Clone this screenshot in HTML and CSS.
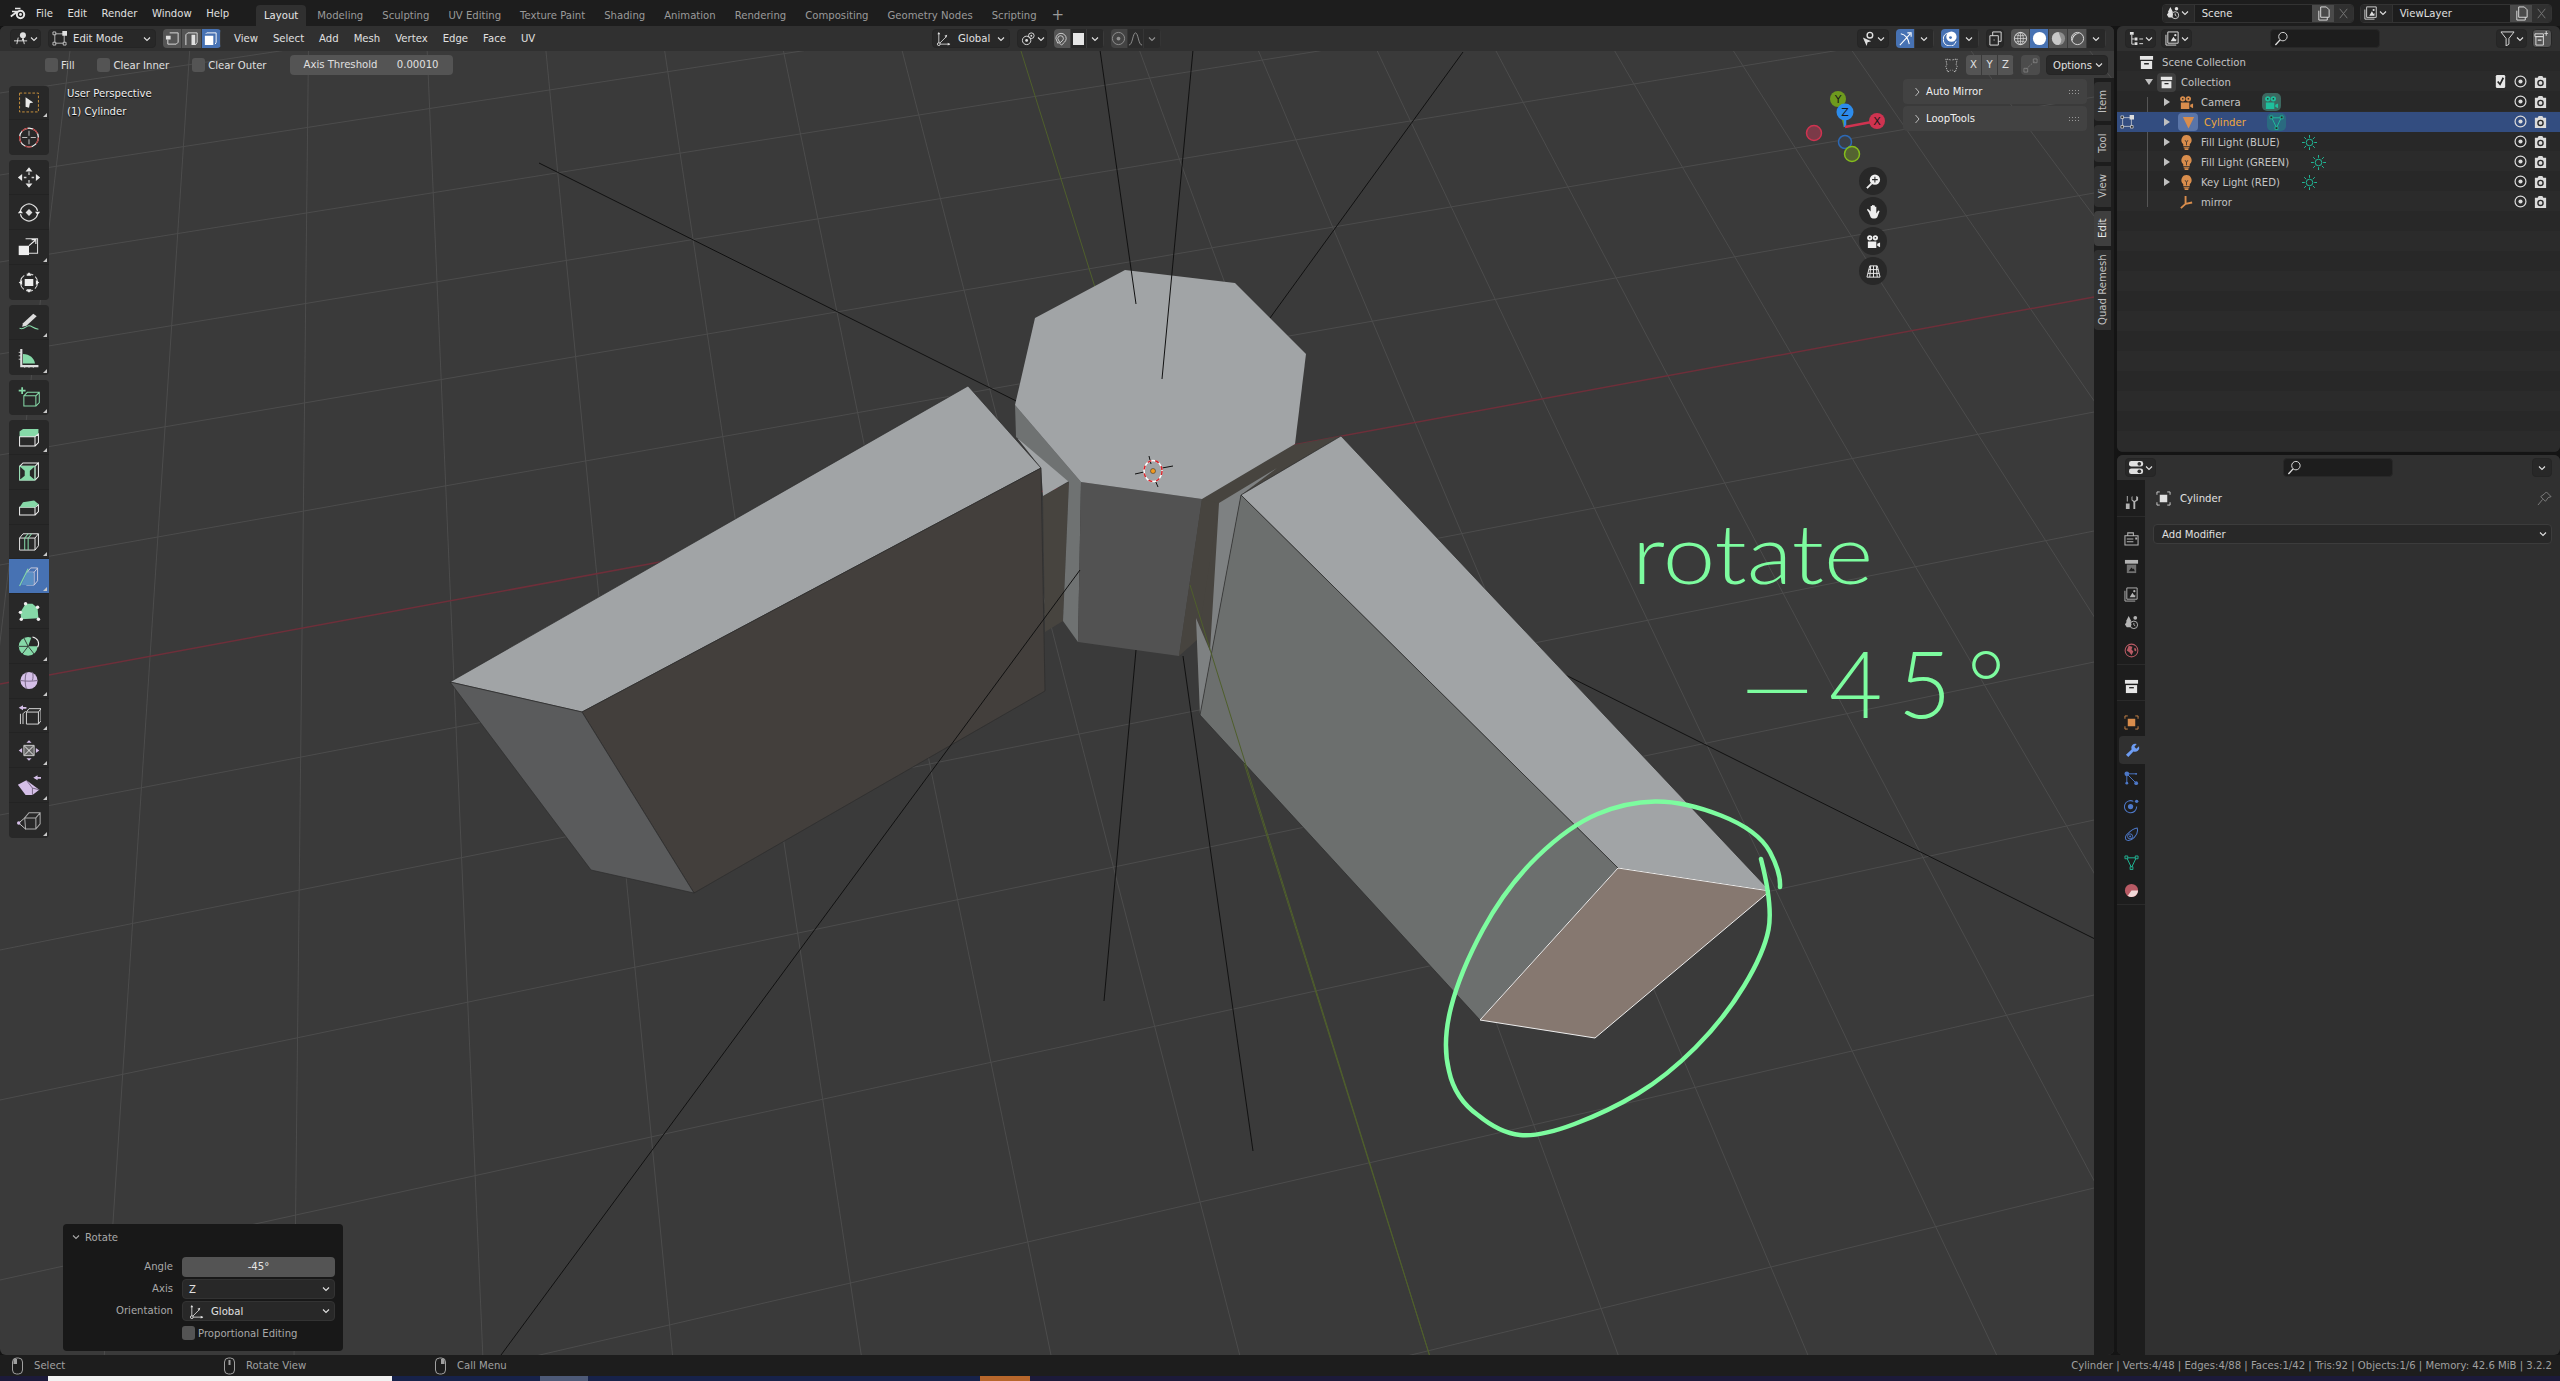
FILE: index.html
```html
<!DOCTYPE html>
<html lang="en">
<head>
    <meta charset="UTF-8">
    <title>Blender 3.2.2</title>
    <link rel="stylesheet" href="styles.css">
</head>
<body>

    <!-- Icon sheet -->
    <svg class="sheet" xmlns="http://www.w3.org/2000/svg">
        <symbol id="chev" viewBox="0 0 10 10"><path d="M2 3.500l3 3 3-3" fill="none" stroke="currentColor" stroke-width="1.100"/></symbol>
        <symbol id="chev-r" viewBox="0 0 10 10"><path d="M3.500 1l3.500 4-3.500 4" fill="none" stroke="currentColor" stroke-width="1"/></symbol>
        <symbol id="logo" viewBox="0 0 16 13"><circle cx="10.500" cy="7.500" r="3.700" fill="none" stroke="currentColor" stroke-width="2"/><circle cx="10.500" cy="7.500" r="1.400" fill="currentColor"/><path d="M5 1.500h5.500M2 4.500h6M.8 9.500L6.800 5" fill="none" stroke="currentColor" stroke-width="1.700"/></symbol>
        <symbol id="gizmo3d" viewBox="0 0 16 16"><path d="M0 10.500h14M3 14l1.500-7M11 14L9.500 7" fill="none" stroke="currentColor"/><circle cx="9.500" cy="4.500" r="3.200" fill="currentColor"/><path d="M8.500 8h2v2h-2z" fill="currentColor"/></symbol>
        <symbol id="mode-edit" viewBox="0 0 16 16"><path d="M3 3h10v10H3z" fill="none" stroke="currentColor" stroke-width=".8"/><path d="M1 1h3v3H1zM1 12h3v3H1zM12 12h3v3h-3z" fill="#282828" stroke="currentColor" stroke-width=".8"/><path d="M11 0h5v5h-5z" fill="currentColor"/></symbol>
        <symbol id="sel-vert" viewBox="0 0 16 16"><path d="M5 2h9v10l-2 2H3V9" fill="none" stroke="currentColor"/><path d="M1 5h5v4H1z" fill="currentColor"/></symbol>
        <symbol id="sel-edge" viewBox="0 0 16 16"><path d="M2 15V4l2-2h10v10l-2 3" fill="none" stroke="currentColor"/><path d="M8 4h4v11H8z" fill="currentColor"/></symbol>
        <symbol id="sel-face" viewBox="0 0 16 16"><path d="M2 5h9v10H2z" fill="currentColor"/><path d="M3 3l1-1h10v10l-1 2" fill="none" stroke="currentColor"/></symbol>
        <symbol id="orient" viewBox="0 0 16 16"><path d="M3 14V2M3 14h12M3 14l8-8" fill="none" stroke="currentColor" stroke-width=".9"/><path d="M1.500 3.500L3 1l1.500 2.500zM12.500 12.500L15 14l-2.500 1.500zM9 5l3-1-1 3z" fill="currentColor"/><circle cx="3" cy="14" r="1.500" fill="#282828" stroke="currentColor"/></symbol>
        <symbol id="pivot" viewBox="0 0 16 16"><circle cx="6" cy="10" r="4.500" fill="none" stroke="currentColor"/><circle cx="6" cy="10" r="1.500" fill="currentColor"/><circle cx="11" cy="5" r="3" fill="none" stroke="currentColor"/><circle cx="11" cy="5" r="1" fill="currentColor"/></symbol>
        <symbol id="magnet" viewBox="0 0 16 16"><path d="M4 13l-2-5a5.500 5.500 0 1 1 11 0c0 3-3 5-5 7l-2-2c2-2 4-3 4-5a3 3 0 1 0-6 0l2 4z" fill="none" stroke="currentColor" stroke-width=".9"/></symbol>
        <symbol id="prop" viewBox="0 0 16 16"><circle cx="8" cy="8" r="6.500" fill="none" stroke="currentColor"/><circle cx="8" cy="8" r="2" fill="currentColor"/></symbol>
        <symbol id="falloff" viewBox="0 0 16 16"><path d="M1 15c4 0 4-13 7-13s3 13 7 13" fill="none" stroke="currentColor"/></symbol>
        <symbol id="selectable" viewBox="0 0 16 16"><circle cx="9.500" cy="4.500" r="3" fill="none" stroke="currentColor" stroke-width="1.500"/><path d="M2 7l9 4-4 1-1 4z" fill="currentColor"/></symbol>
        <symbol id="gizmo-arrows" viewBox="0 0 16 16"><path d="M2 15L13 3M3 3c5 1 8 5 9 11M10 2h4v4" fill="none" stroke="currentColor" stroke-width="1.100"/></symbol>
        <symbol id="overlay" viewBox="0 0 16 16"><path d="M6 2a7 7 0 1 0 8 9" fill="none" stroke="currentColor"/><circle cx="9" cy="6" r="5.500" fill="currentColor"/><circle cx="8" cy="7" r="1.500" fill="#4772b3"/></symbol>
        <symbol id="xray" viewBox="0 0 16 16"><path d="M2 5h9v10H2z" fill="none" stroke="currentColor"/><path d="M5 5V1h9v10h-3" fill="none" stroke="currentColor"/><path d="M6 9h1v1H6z" fill="currentColor"/></symbol>
        <symbol id="sh-wire" viewBox="0 0 16 16"><circle cx="8" cy="8" r="6.500" fill="none" stroke="currentColor"/><path d="M1.500 8h13M8 1.500v13M3 4c3 1.500 7 1.500 10 0M3 12c3-1.500 7-1.500 10 0" fill="none" stroke="currentColor" stroke-width=".7"/><ellipse cx="8" cy="8" rx="3" ry="6.500" fill="none" stroke="currentColor" stroke-width=".7"/></symbol>
        <symbol id="sh-solid" viewBox="0 0 16 16"><circle cx="8" cy="8" r="7" fill="currentColor"/></symbol>
        <symbol id="sh-mat" viewBox="0 0 16 16"><circle cx="8" cy="8" r="7" fill="#8d8d8d"/><path d="M8 1a7 7 0 0 0 0 14 7 7 0 0 0 3-6z" fill="#c8c8c8"/></symbol>
        <symbol id="sh-render" viewBox="0 0 16 16"><circle cx="8" cy="8" r="6.500" fill="none" stroke="currentColor"/><path d="M3 11A6 6 0 0 1 11 3a7 7 0 0 0-8 8z" fill="currentColor"/></symbol>
        <symbol id="mirror" viewBox="0 0 16 16"><path d="M7 2L2 1l1 6-1 2 2 6 3-2M9 2l5-1-1 6 1 2-2 6-3-2" fill="none" stroke="currentColor" stroke-dasharray="1.500 1"/></symbol>
        <symbol id="snap-mesh" viewBox="0 0 16 16"><path d="M3 12L13 3" stroke="currentColor" stroke-dasharray="2 1.500" fill="none"/><path d="M1 11h4v4H1zM11 1h4v4h-4z" fill="none" stroke="currentColor"/></symbol>
        <symbol id="scene" viewBox="0 0 16 16"><path d="M5 1l3 6H2zM3 7h4l1 3-1 3H3l-2-3z" fill="currentColor"/><circle cx="12" cy="3" r="2" fill="currentColor"/><circle cx="10.500" cy="10.500" r="4" fill="none" stroke="currentColor"/><path d="M10.500 8.500v2l1.500 1" fill="none" stroke="currentColor"/></symbol>
        <symbol id="viewlayer" viewBox="0 0 16 16"><path d="M1 4v11h11M3 2v11h11V1H3z" fill="none" stroke="currentColor"/><path d="M6 11l3-5 2 3 1-1v3z" fill="currentColor"/><circle cx="11" cy="4.500" r="1.200" fill="currentColor"/></symbol>
        <symbol id="copy" viewBox="0 0 16 16"><path d="M3 5v10h9V12M5 12V1h6l3 3v8z" fill="none" stroke="currentColor"/></symbol>
        <symbol id="cross" viewBox="0 0 16 16"><path d="M4 3l8 10M12 3L4 13" fill="none" stroke="currentColor"/></symbol>
        <symbol id="outliner" viewBox="0 0 16 16"><path d="M1 1h4v3H1zM6 7h3v3H6zM6 12h3v3H6z" fill="currentColor"/><path d="M3 4v10h3M3 8.500h3M11 8.500h4M11 13.500h4" fill="none" stroke="currentColor"/></symbol>
        <symbol id="search" viewBox="0 0 16 16"><circle cx="9.500" cy="6" r="4.500" fill="none" stroke="currentColor"/><path d="M6.500 9.500L1.500 15" fill="none" stroke="currentColor" stroke-width="1.400"/></symbol>
        <symbol id="zoom-plus" viewBox="0 0 16 16"><circle cx="9.500" cy="6" r="5.500" fill="currentColor"/><path d="M6 10L1 15" fill="none" stroke="currentColor" stroke-width="2"/><path d="M9.500 3v6M6.500 6h6" fill="none" stroke="#282828" stroke-width="1.100"/></symbol>
        <symbol id="filter" viewBox="0 0 16 16"><path d="M1 1h14L9.500 8v6l-3 2V8z" fill="none" stroke="currentColor"/></symbol>
        <symbol id="new-coll" viewBox="0 0 16 16"><path d="M1 3h9v3H1zM2 6h8v9H2z" fill="none" stroke="currentColor"/><path d="M4 9h4v1.500H4zM11 2h4v1h-4zM12.500 0h1v5h-1z" fill="currentColor"/></symbol>
        <symbol id="collection" viewBox="0 0 16 16"><path d="M1 1h14v4H1z" fill="currentColor"/><path d="M2 6.500h12V15H2z" fill="currentColor"/><path d="M5.500 8.500h5V10h-5z" fill="#282828"/></symbol>
        <symbol id="camera" viewBox="0 0 16 16"><circle cx="4" cy="4" r="2.800" fill="currentColor"/><circle cx="10" cy="4" r="2.800" fill="currentColor"/><path d="M2 8h9v7H2zM12 10.500L15 9v5l-3-1.500z" fill="currentColor"/><circle cx="4" cy="4" r=".9" fill="#282828"/><circle cx="10" cy="4" r=".9" fill="#282828"/></symbol>
        <symbol id="mesh-tri" viewBox="0 0 16 16"><path d="M2 2h12L8 14.500z" fill="currentColor"/></symbol>
        <symbol id="mesh-data" viewBox="0 0 16 16"><path d="M3 3h10L8 13.500z" fill="none" stroke="currentColor"/><path d="M1 1h3v3H1zM12 1h3v3h-3zM6.500 12.500h3v3h-3z" fill="#282828" stroke="currentColor" stroke-width=".9"/></symbol>
        <symbol id="bulb" viewBox="0 0 16 16"><path d="M8 0a5.500 5.500 0 0 0-3.500 9.700V12h7V9.700A5.500 5.500 0 0 0 8 0zM5 13h6v1H5zM6 14.500h4V16H6z" fill="currentColor"/><path d="M6.500 5.500L8 8l1.500-2.500M8 8v3" fill="none" stroke="#282828" stroke-width=".8"/></symbol>
        <symbol id="sun" viewBox="0 0 16 16"><circle cx="8" cy="8" r="3.500" fill="none" stroke="currentColor"/><path d="M8 0v3M8 13v3M0 8h3M13 8h3M2.300 2.300l2.200 2.200M11.500 11.500l2.200 2.200M13.700 2.300l-2.200 2.200M4.500 11.500l-2.200 2.200" fill="none" stroke="currentColor"/></symbol>
        <symbol id="empty" viewBox="0 0 16 16"><path d="M7 1v8.500L2 14M7 9.500L14 8" fill="none" stroke="currentColor" stroke-width="2"/></symbol>
        <symbol id="eye" viewBox="0 0 16 16"><circle cx="8" cy="8" r="5.800" fill="none" stroke="currentColor" stroke-width="1.300"/><circle cx="8" cy="8" r="2.200" fill="currentColor"/></symbol>
        <symbol id="render-cam" viewBox="0 0 16 16"><path d="M2 4h3l1-2h4l1 2h3v11H2z" fill="currentColor"/><circle cx="8" cy="9.500" r="3.500" fill="#282828"/><circle cx="8" cy="9.500" r="2" fill="currentColor"/></symbol>
        <symbol id="tick" viewBox="0 0 16 16"><rect x="3" y="1" width="10" height="14" rx="1.500" fill="currentColor"/><path d="M5 8l2.500 3L11 4" fill="none" stroke="#222" stroke-width="1.800"/></symbol>
        <symbol id="props" viewBox="0 0 16 16"><rect x="0" y="1" width="15" height="6" rx="2.500" fill="currentColor"/><rect x="0" y="9" width="15" height="6" rx="2.500" fill="currentColor"/><circle cx="11" cy="4" r="2" fill="#303030"/><circle cx="11" cy="12" r="2" fill="#303030"/></symbol>
        <symbol id="obj-frame" viewBox="0 0 16 16"><path d="M1 4V1h3M12 1h3v3M15 12v3h-3M4 15H1v-3" fill="none" stroke="currentColor" stroke-width=".9"/><path d="M4 4h8v8H4z" fill="currentColor"/></symbol>
        <symbol id="pin" viewBox="0 0 16 16"><path d="M10 1l5 5-3 1-3 4-5-5 4-3zM6 9l-5 6" fill="none" stroke="currentColor" stroke-width=".9"/></symbol>
        <symbol id="t-tool" viewBox="0 0 16 16"><path d="M3 1h1v6H3zM2 9h4v6H2z" fill="currentColor"/><path d="M9 1v4l2 1.500L13 5V1l2 1v3.500l-3 2V15h-2V7.500L8 5.500V2z" fill="currentColor"/></symbol>
        <symbol id="t-render" viewBox="0 0 16 16"><path d="M1 5h14v10H1zM4 2h6v3H4z" fill="none" stroke="currentColor" stroke-width="1.100"/><path d="M3 8h7v1H3zM3 11h7v1H3zM12 7h2v2h-2z" fill="currentColor"/></symbol>
        <symbol id="t-output" viewBox="0 0 16 16"><path d="M1 1h14v4H1z" fill="currentColor"/><path d="M3 6h10v9H3z" fill="currentColor" opacity=".55"/><path d="M5 13l3-4 1.500 2 1-1 1 3z" fill="#1d1d1d"/></symbol>
        <symbol id="t-world" viewBox="0 0 16 16"><circle cx="8" cy="8" r="6.800" fill="none" stroke="currentColor" stroke-width="1.100"/><path d="M5 3l4 1-1 3 2 2-2 4-2-3-3-2zM11 5l2 1v3l-2-1z" fill="currentColor"/></symbol>
        <symbol id="t-wrench" viewBox="0 0 16 16"><path d="M15 3.500l-3 2.500-2-2 2.500-3A4.500 4.500 0 0 0 7 7L1 12.500 3.500 15 9 9a4.500 4.500 0 0 0 6-5.500z" fill="currentColor"/></symbol>
        <symbol id="t-particle" viewBox="0 0 16 16"><circle cx="3" cy="3" r="2.500" fill="currentColor"/><circle cx="13" cy="13" r="2" fill="currentColor"/><circle cx="3" cy="13" r="1.500" fill="currentColor"/><circle cx="13" cy="3" r="1" fill="currentColor"/><path d="M3 3l10 10M3 3v10M3 3h10" fill="none" stroke="currentColor"/></symbol>
        <symbol id="t-physics" viewBox="0 0 16 16"><circle cx="7" cy="8" r="2.800" fill="currentColor"/><circle cx="13.500" cy="2.500" r="1.800" fill="currentColor"/><path d="M10 2.500A6.500 6.500 0 1 0 13.500 8" fill="none" stroke="currentColor" stroke-width="1.100"/></symbol>
        <symbol id="t-constraint" viewBox="0 0 16 16"><path d="M14 1c1 3 0 7-3 10s-6 4-8 3-2-4 0-6 8-7 11-7z" fill="none" stroke="currentColor" stroke-width="1.100"/><circle cx="6.500" cy="10" r="2.700" fill="none" stroke="currentColor"/><circle cx="6.500" cy="10" r="1" fill="currentColor"/></symbol>
        <symbol id="t-material" viewBox="0 0 16 16"><circle cx="8" cy="8" r="7" fill="currentColor"/><path d="M8 8h7a7 7 0 0 1-11 5.500z" fill="#f0d8d8"/></symbol>
        <symbol id="mouse-l" viewBox="0 0 12 18"><rect x="1" y="1" width="10" height="16" rx="4" fill="none" stroke="currentColor"/><path d="M2 7V3.500A2.500 2.500 0 0 1 5.500 2v5z" fill="currentColor"/></symbol>
        <symbol id="mouse-m" viewBox="0 0 12 18"><rect x="1" y="1" width="10" height="16" rx="4" fill="none" stroke="currentColor"/><path d="M5 3h2v5H5z" fill="currentColor"/></symbol>
        <symbol id="mouse-r" viewBox="0 0 12 18"><rect x="1" y="1" width="10" height="16" rx="4" fill="none" stroke="currentColor"/><path d="M10 7V3.500A2.500 2.500 0 0 0 6.500 2v5z" fill="currentColor"/></symbol>
    </svg>

    <!-- Top bar -->
    <header class="topbar">
        <svg class="ico logo"><use href="#logo"/></svg>
        <nav class="menus">
            <a>File</a><a>Edit</a><a>Render</a><a>Window</a><a>Help</a>
        </nav>
        <nav class="workspaces">
            <a class="active">Layout</a><a>Modeling</a><a>Sculpting</a><a>UV Editing</a><a>Texture Paint</a><a>Shading</a><a>Animation</a><a>Rendering</a><a>Compositing</a><a>Geometry Nodes</a><a>Scripting</a>
            <span class="plus">+</span>
        </nav>
        <div class="datablock scene-block">
            <span class="db-type"><svg class="ico"><use href="#scene"/></svg><svg class="chev"><use href="#chev"/></svg></span>
            <span class="db-name">Scene</span>
            <span class="db-copy"><svg class="ico"><use href="#copy"/></svg></span>
            <span class="db-x"><svg class="ico"><use href="#cross"/></svg></span>
        </div>
        <div class="datablock">
            <span class="db-type"><svg class="ico"><use href="#viewlayer"/></svg><svg class="chev"><use href="#chev"/></svg></span>
            <span class="db-name">ViewLayer</span>
            <span class="db-copy"><svg class="ico"><use href="#copy"/></svg></span>
            <span class="db-x"><svg class="ico"><use href="#cross"/></svg></span>
        </div>
    </header>

    <main class="workspace">

        <!-- 3D viewport -->
        <section class="viewport">
            <svg class="scene" viewBox="0 26 2114 1329" xmlns="http://www.w3.org/2000/svg">
                <!-- grid -->
                <path class="grid" d="M0 15L2094 -289M0 93L2094 -221M0 175L2094 -149M0 262L2094 -73M0 354L2094 8M0 455L2094 97M0 565L2094 193M0 815L2094 412M0 950L2094 531M0 1100L2094 662M0 1280L2094 820M0 1480L2094 995M0 1700L2094 1188M0 1940L2094 1399"/>
                <path class="grid" d="M-40 0L-275 1360M76 0L-85 1360M193 0L104 1360M309 0L294 1360M425 0L483 1360M541 0L673 1360M657 0L862 1360M773 0L1052 1360M889 0L1241 1360M1121 0L1620 1360M1237 0L1810 1360M1353 0L1999 1360M1469 0L2189 1360M1585 0L2378 1360M1701 0L2568 1360M1817 0L2757 1360M1933 0L2947 1360M2049 0L3136 1360"/>
                <path class="axis-red" d="M0 684L2094 297"/>
                <path class="axis-green" d="M1005 0L1431 1360"/>
                <!-- light objects behind the mesh -->
                <path class="wire" d="M539 163L2095 939M1463 52L1270 318M1136 650L1104 1001M1183 656L1253 1151"/>
                <!-- central column -->
                <polygon class="f-dark" points="1043,496 1069,482 1063,621 1045,632"/>
                <polygon class="f-dark" points="1179,656 1202,499 1293,445 1341,436 1241,495 1200,715 1196,618"/>
                <polygon class="f-light" points="1018,439 1028,435 1069,481 1043,496 1041,468"/>
                <polygon class="f-strip" points="1015,405 1081,482 1069,482 1016,437"/>
                <polygon class="f-strip" points="1069,482 1081,482 1078,642 1063,621"/>
                <polygon class="f-side" points="1081,482 1202,499 1179,656 1078,642"/>
                <polygon class="f-dark" points="1202,499 1219,503 1198,639 1179,656"/>
                <polygon class="f-top" points="1125,270 1235,283 1306,354 1295,444 1202,499 1081,482 1015,405 1035,318"/>
                <polygon class="f-strip2" points="1219,503 1277,468 1241,495 1200,715 1196,618 1210,651"/>
                <!-- left box -->
                <polygon class="f-top edge" points="968,386 1041,468 582,712 450,682"/>
                <polygon class="f-brown edge" points="582,712 1041,468 1045,691 694,893"/>
                <polygon class="f-end edge" points="450,682 582,712 694,893 591,870"/>
                <!-- right box -->
                <polygon class="f-top edge" points="1341,436 1770,891 1618,868 1241,495"/>
                <polygon class="f-green edge" points="1241,495 1618,868 1480,1020 1200,715"/>
                <polygon class="f-selected" points="1618,868 1770,891 1595,1038 1480,1020"/>
                <!-- lines that show through the mesh -->
                <path class="wire" d="M1100 50L1136 304M1193 50L1162 379M1080 570L501 1355"/>
                <path class="axis-green" d="M1190 585L1431 1360"/>
                <!-- 3D cursor -->
                <path class="cursor-tick" d="M1135 474L1144 472M1162 468L1173 466M1149 456L1151 464M1155 480L1158 487"/>
                <ellipse class="cursor-a" cx="1153" cy="471" rx="9" ry="10.500"/>
                <ellipse class="cursor-b" cx="1153" cy="471" rx="9" ry="10.500"/>
                <circle class="origin" cx="1153" cy="471" r="2.500"/>
                <!-- annotation -->
                <path class="note-ring" d="M1780 887Q1781 873 1770 852Q1758 830 1721 815.500Q1684 801 1655 801.500Q1626 802 1597.500 814Q1569 826 1537.500 856.500Q1506 887 1483 929.500Q1460 972 1451 1007.500Q1442 1043 1449 1071Q1455 1099 1478.500 1115.500Q1500 1133 1520 1135Q1540 1137 1574.500 1124Q1609 1111 1638 1093.500Q1667 1076 1695.500 1047.500Q1724 1019 1744 986Q1764 953 1768.500 929.500Q1773 906 1761 859"/>
                <text class="note" x="1632" y="584" textLength="241" lengthAdjust="spacingAndGlyphs">rotate</text>
                <text class="note note-angle" x="1741" y="718" textLength="264" lengthAdjust="spacing">—45°</text>
                <!-- navigation gizmo -->
                <path class="gz-y" d="M1845 127L1838 99"/>
                <path class="gz-z" d="M1845 127V112"/>
                <path class="gz-x" d="M1845 127L1877 121"/>
                <circle class="gz-nx" cx="1814" cy="133" r="7.500"/>
                <circle class="gz-nz" cx="1845" cy="142" r="6.500"/>
                <circle class="gz-ny" cx="1852" cy="154" r="7.500"/>
                <circle class="gz-fy" cx="1838" cy="99" r="8"/>
                <circle class="gz-fz" cx="1845" cy="112" r="8.500"/>
                <circle class="gz-fx" cx="1877" cy="121" r="8"/>
                <text class="gz-label" x="1838" y="103">Y</text>
                <text class="gz-label" x="1845" y="116">Z</text>
                <text class="gz-label" x="1877" y="125">X</text>
            </svg>

            <!-- Viewport header -->
            <div class="vp-header">
                <div class="hdr-left">
                    <span class="btn w-editor"><svg class="ico"><use href="#gizmo3d"/></svg><svg class="chev"><use href="#chev"/></svg></span>
                    <span class="btn w-mode"><svg class="ico"><use href="#mode-edit"/></svg><span class="btn-label">Edit Mode</span><svg class="chev push"><use href="#chev"/></svg></span>
                    <span class="seg w-selmode">
                        <i class="seg-item"><svg class="ico"><use href="#sel-vert"/></svg></i>
                        <i class="seg-item"><svg class="ico"><use href="#sel-edge"/></svg></i>
                        <i class="seg-item on"><svg class="ico"><use href="#sel-face"/></svg></i>
                    </span>
                    <nav class="vp-menu">
                        <a>View</a><a>Select</a><a>Add</a><a>Mesh</a><a>Vertex</a><a>Edge</a><a>Face</a><a>UV</a>
                    </nav>
                </div>
                <div class="hdr-center">
                    <span class="btn w-global"><svg class="ico"><use href="#orient"/></svg><span class="btn-label">Global</span><svg class="chev push"><use href="#chev"/></svg></span>
                    <span class="btn w-pivot"><svg class="ico"><use href="#pivot"/></svg><svg class="chev"><use href="#chev"/></svg></span>
                    <span class="seg w-snap">
                        <i class="seg-item grey"><svg class="ico"><use href="#magnet"/></svg></i>
                        <i class="seg-item dark"><b class="snap-square"></b></i>
                        <i class="seg-item dark"><svg class="chev"><use href="#chev"/></svg></i>
                    </span>
                    <span class="seg w-prop dim">
                        <i class="seg-item grey"><svg class="ico"><use href="#prop"/></svg></i>
                        <i class="seg-item dark"><svg class="ico"><use href="#falloff"/></svg></i>
                        <i class="seg-item dark"><svg class="chev"><use href="#chev"/></svg></i>
                    </span>
                </div>
                <div class="hdr-right">
                    <span class="btn w-pick"><svg class="ico"><use href="#selectable"/></svg><svg class="chev"><use href="#chev"/></svg></span>
                    <span class="seg w-gizmo">
                        <i class="seg-item on"><svg class="ico"><use href="#gizmo-arrows"/></svg></i>
                        <i class="seg-item dark"><svg class="chev"><use href="#chev"/></svg></i>
                    </span>
                    <span class="seg w-gizmo">
                        <i class="seg-item on"><svg class="ico"><use href="#overlay"/></svg></i>
                        <i class="seg-item dark"><svg class="chev"><use href="#chev"/></svg></i>
                    </span>
                    <span class="btn w-xray"><svg class="ico"><use href="#xray"/></svg></span>
                    <span class="seg w-shading">
                        <i class="seg-item grey"><svg class="ico"><use href="#sh-wire"/></svg></i>
                        <i class="seg-item on"><svg class="ico"><use href="#sh-solid"/></svg></i>
                        <i class="seg-item grey"><svg class="ico"><use href="#sh-mat"/></svg></i>
                        <i class="seg-item grey"><svg class="ico"><use href="#sh-render"/></svg></i>
                        <i class="seg-item dark"><svg class="chev"><use href="#chev"/></svg></i>
                    </span>
                </div>
            </div>

            <!-- Tool settings -->
            <div class="tool-settings">
                <label class="check"><i></i>Fill</label>
                <label class="check"><i></i>Clear Inner</label>
                <label class="check"><i></i>Clear Outer</label>
                <span class="number"><span>Axis Threshold</span><span>0.00010</span></span>
                <div class="ts-right">
                    <svg class="ico dim-ico"><use href="#mirror"/></svg>
                    <span class="xyz"><i>X</i><i>Y</i><i>Z</i></span>
                    <span class="snapbtn"><svg class="ico"><use href="#snap-mesh"/></svg></span>
                    <span class="btn w-options"><span>Options</span><svg class="chev push"><use href="#chev"/></svg></span>
                </div>
            </div>

            <div class="vp-info">
                <div>User Perspective</div>
                <div>(1) Cylinder</div>
            </div>

            <!-- Toolbar -->
            <div class="toolbar">
                <div class="tool-group">
                    <div class="tool more"><svg viewBox="0 0 28 24"><rect x="3" y="1" width="22" height="22" fill="none" stroke="#e0a040" stroke-dasharray="3 2"/><path d="M10 6l9 6-4 1-1 5-4-1z" fill="#e8e8e8"/></svg></div>
                    <div class="tool"><svg viewBox="0 0 28 24"><circle cx="14" cy="12" r="11" fill="none" stroke="#eee" stroke-width="1.500"/><circle cx="14" cy="12" r="11" fill="none" stroke="#a33" stroke-width="1.500" stroke-dasharray="8 6"/><path d="M14 4v6M14 14v6M6 12h6M16 12h6" stroke="#bbb" stroke-width="1.200"/></svg></div>
                </div>
                <div class="tool-group">
                    <div class="tool"><svg viewBox="0 0 28 24"><path d="M14 0l4 5h-8zM14 24l4-5h-8zM1 12l5-4v8zM27 12l-5-4v8z" fill="#e8e8e8"/><path d="M14 6v3M14 15v3M8 12h3M17 12h3" stroke="#ccc" stroke-width="1.500"/></svg></div>
                    <div class="tool"><svg viewBox="0 0 28 24"><path d="M14 8l4 4-4 4-4-4z" fill="#ddd"/><path d="M4 10c1-6 8-8 10-8s9 2 10 8M4 14c1 6 8 8 10 8s9-2 10-8" fill="none" stroke="#ddd" stroke-width="1.300"/><path d="M1 13h6l-3-4zM27 11h-6l3 4z" fill="#eee"/></svg></div>
                    <div class="tool more"><svg viewBox="0 0 28 24"><path d="M10 3h14v17H4v-7" fill="none" stroke="#ddd" stroke-width="1.200"/><path d="M2 11h12v11H2z" fill="#eee"/><path d="M14 11l7-6M17 4h5v5" fill="none" stroke="#eee" stroke-width="1.300"/></svg></div>
                    <div class="tool"><svg viewBox="0 0 28 24"><circle cx="14" cy="12" r="10" fill="none" stroke="#ddd" stroke-dasharray="8 3" stroke-width="1.200"/><path d="M9 8h10v8H9z" fill="#eee"/><path d="M14 0l3 4h-6zM14 24l3-4h-6zM2 12l4-3v6zM26 12l-4-3v6z" fill="#eee"/></svg></div>
                </div>
                <div class="tool-group">
                    <div class="tool more"><svg viewBox="0 0 28 24"><path d="M7 14L19 3l4 3-12 11-5 1z" fill="#ddd"/><path d="M3 20c6 2 7-3 11-3s4 3 11 4" fill="none" stroke="#86d9a8" stroke-width="1.200"/></svg></div>
                    <div class="tool more"><svg viewBox="0 0 28 24"><path d="M5 2v20h20" fill="none" stroke="#ddd" stroke-width="2.500"/><path d="M7 19V8c8 0 13 5 14 11z" fill="#86d9a8"/><path d="M2 6h3M2 10h3M2 14h3M9 22v2M14 22v2M19 22v2" stroke="#ddd"/></svg></div>
                </div>
                <div class="tool-group">
                    <div class="tool more"><svg viewBox="0 0 28 24"><path d="M8 10h14v12H8zM8 10l4-4h14v12l-4 4M22 10l4-4" fill="none" stroke="#86d9a8" stroke-width="1.200"/><path d="M2 4h8M6 0v8" stroke="#86d9a8" stroke-width="2"/></svg></div>
                </div>
                <div class="tool-group">
                    <div class="tool more"><svg viewBox="0 0 28 24"><path d="M3 5l4-3h18v6l-4 3H3z" fill="#86d9a8"/><path d="M3 11h18v11H3zM21 11l4-3v10l-4 4" fill="none" stroke="#eee" stroke-width="1.200"/></svg></div>
                    <div class="tool"><svg viewBox="0 0 28 24"><path d="M3 6h18v16H3zM21 6l4-4v16l-4 4M3 6l4-4h18" fill="none" stroke="#eee" stroke-width="1.200"/><path d="M3 6h18l-6 5v6l6 5H3l6-5v-6z" fill="#86d9a8"/><path d="M3 6h18v16H3z" fill="none" stroke="#86d9a8"/></svg></div>
                    <div class="tool"><svg viewBox="0 0 28 24"><path d="M3 13h18v9H3zM21 13l4-3v8l-4 4" fill="none" stroke="#eee" stroke-width="1.200"/><path d="M3 13l4-6 13-2 5 4-4 4z" fill="#86d9a8"/></svg></div>
                    <div class="tool more"><svg viewBox="0 0 28 24"><path d="M3 8h18v14H3zM21 8l4-5v14l-4 5M3 8l4-5h18" fill="none" stroke="#eee" stroke-width="1.100"/><path d="M9 22V8l4-5M13 22V8l4-5" fill="none" stroke="#86d9a8" stroke-width="1.200"/></svg></div>
                    <div class="tool active more"><svg viewBox="0 0 28 24"><path d="M12 7l4-5h8v15l-4 5h-9z" fill="none" stroke="#ccd" stroke-width="1.100"/><path d="M12 7h8v15M20 7l4-5" fill="none" stroke="#ccd" stroke-width="1.100"/><path d="M12 7h7v15H5z" fill="#5a8fc4"/><path d="M3 23L13 3" stroke="#86d9a8" stroke-width="1.300"/></svg></div>
                    <div class="tool"><svg viewBox="0 0 28 24"><path d="M10 3h8l6 5 1 12-20 1-1-8z" fill="#86d9a8"/><circle cx="10" cy="3" r="2" fill="#eee"/><circle cx="24" cy="7" r="2" fill="#eee"/><circle cx="4" cy="13" r="2" fill="#eee"/><circle cx="5" cy="21" r="2" fill="#eee"/><circle cx="25" cy="21" r="2" fill="#eee"/></svg></div>
                    <div class="tool more"><svg viewBox="0 0 28 24"><circle cx="13" cy="13" r="11" fill="#86d9a8"/><path d="M13 13L17 2 27 9 24 13z" fill="#282828"/><path d="M2 13h11M13 13L6 22M13 13l7 9M13 13L8 3" stroke="#282828"/><path d="M18 2c6 1 9 7 6 12" fill="none" stroke="#eee" stroke-width="1.200"/></svg></div>
                    <div class="tool more"><svg viewBox="0 0 28 24"><ellipse cx="14" cy="12" rx="10" ry="10" fill="#d5bfe8"/><path d="M4 12c6 1 14 1 20 0M11 2c-2 6-2 14 0 20M18 2c1 3 1 7 0 10" fill="none" stroke="#6c5c78"/></svg></div>
                    <div class="tool more"><svg viewBox="0 0 28 24"><path d="M11 8h14v14H11zM11 8l3-4h14M25 8l3-4v14l-3 4M7 22V10l3-3M4 22V10" fill="none" stroke="#ddd" stroke-width="1.100"/><path d="M2 3l5-3v2h4v2H7v2z" fill="#d5bfe8"/></svg></div>
                    <div class="tool more"><svg viewBox="0 0 28 24"><path d="M8 6h12v12H8z" fill="#666" stroke="#ddd"/><path d="M9 7l10 10M19 7L9 17" stroke="#fff"/><path d="M14 0l3 3h-6zM14 24l3-3h-6zM2 12l4-3v6zM26 12l-4-3v6z" fill="#d5bfe8"/></svg></div>
                    <div class="tool more"><svg viewBox="0 0 28 24"><path d="M1 11l10-5 15 11-8 6H10z" fill="#d5bfe8"/><path d="M11 6l7 9 8 2M18 15v8" fill="none" stroke="#6c5c78"/><path d="M19 3l5-3v2h4v2h-4v2z" fill="#d5bfe8"/></svg></div>
                    <div class="tool more"><svg viewBox="0 0 28 24"><path d="M9 9l5-6h13v13l-5 6H10zM9 9h13v13M22 9l5-6" fill="none" stroke="#aaa" stroke-width="1.200"/><path d="M10 22L2 15l7-6" fill="none" stroke="#ccc" stroke-width="1.100"/><circle cx="2" cy="15" r="2" fill="#d5bfe8"/></svg></div>
                </div>
            </div>

            <!-- Navigation buttons -->
            <div class="nav-buttons">
                <span class="nav-btn"><svg class="ico"><use href="#zoom-plus"/></svg></span>
                <span class="nav-btn"><svg class="ico" viewBox="0 0 16 16"><path d="M3 9L1 6l1-1 3 3V2h1.500v5V1H8v6V1.500h1.500V7V3H11v7l2-3 1.500.5L12 14c-1 2-6 2-7 0z" fill="#eee"/></svg></span>
                <span class="nav-btn"><svg class="ico"><use href="#camera"/></svg></span>
                <span class="nav-btn"><svg class="ico" viewBox="0 0 16 16"><path d="M4 2h8l3 12H1zM8 2v12M3 6h10M2 10h12M5 2L4 14M11 2l1 12" fill="none" stroke="#eee"/></svg></span>
            </div>

            <!-- Sidebar panels -->
            <div class="side-panels">
                <div class="side-panel"><svg class="chev-r"><use href="#chev-r"/></svg>Auto Mirror<span class="grip"></span></div>
                <div class="side-panel"><svg class="chev-r"><use href="#chev-r"/></svg>LoopTools<span class="grip"></span></div>
            </div>
            <div class="side-tabs">
                <a class="t-item">Item</a>
                <a class="t-tool">Tool</a>
                <a class="t-view">View</a>
                <a class="t-edit active">Edit</a>
                <a class="t-quad">Quad Remesh</a>
            </div>

            <!-- Last operator panel -->
            <div class="op-panel">
                <div class="op-title"><svg class="chev"><use href="#chev"/></svg>Rotate</div>
                <div class="op-grid">
                    <span class="op-label">Angle</span><span class="op-value">-45°</span>
                    <span class="op-label">Axis</span><span class="op-select">Z<svg class="chev push"><use href="#chev"/></svg></span>
                    <span class="op-label">Orientation</span><span class="op-select"><svg class="ico"><use href="#orient"/></svg><span class="btn-label">Global</span><svg class="chev push"><use href="#chev"/></svg></span>
                    <span></span><label class="check op-check"><i></i>Proportional Editing</label>
                </div>
            </div>
        </section>

        <div class="side-column">

            <!-- Outliner -->
            <section class="outliner">
                <div class="pane-header">
                    <span class="btn w-editor"><svg class="ico"><use href="#outliner"/></svg><svg class="chev"><use href="#chev"/></svg></span>
                    <span class="btn w-editor w-display"><svg class="ico"><use href="#viewlayer"/></svg><svg class="chev"><use href="#chev"/></svg></span>
                    <span class="search-box out-search"><svg class="ico"><use href="#search"/></svg></span>
                    <span class="btn w-editor w-filter"><svg class="ico"><use href="#filter"/></svg><svg class="chev"><use href="#chev"/></svg></span>
                    <span class="btn w-new"><svg class="ico"><use href="#new-coll"/></svg></span>
                </div>
                <div class="tree">
                    <span class="tree-line"></span>
                    <div class="row d0"><svg class="ico c-white"><use href="#collection"/></svg><span class="name">Scene Collection</span></div>
                    <div class="row d1"><i class="tri down"></i><span class="icon-box"><svg class="ico c-white"><use href="#collection"/></svg></span><span class="name">Collection</span>
                        <span class="row-end"><svg class="ico c-white"><use href="#tick"/></svg><svg class="ico"><use href="#eye"/></svg><svg class="ico"><use href="#render-cam"/></svg></span></div>
                    <div class="row d2"><i class="tri"></i><svg class="ico c-orange"><use href="#camera"/></svg><span class="name">Camera</span><span class="child-box"><svg class="ico c-teal"><use href="#camera"/></svg></span>
                        <span class="row-end"><svg class="ico"><use href="#eye"/></svg><svg class="ico"><use href="#render-cam"/></svg></span></div>
                    <div class="row d2 selected"><svg class="ico row-mode"><use href="#mode-edit"/></svg><i class="tri"></i><span class="active-box"><svg class="ico c-orange"><use href="#mesh-tri"/></svg></span><span class="name c-name">Cylinder</span><span class="child-box sel"><svg class="ico c-teal"><use href="#mesh-data"/></svg></span>
                        <span class="row-end"><svg class="ico"><use href="#eye"/></svg><svg class="ico"><use href="#render-cam"/></svg></span></div>
                    <div class="row d2"><i class="tri"></i><svg class="ico c-orange"><use href="#bulb"/></svg><span class="name">Fill Light (BLUE)</span><svg class="ico c-teal child"><use href="#sun"/></svg>
                        <span class="row-end"><svg class="ico"><use href="#eye"/></svg><svg class="ico"><use href="#render-cam"/></svg></span></div>
                    <div class="row d2"><i class="tri"></i><svg class="ico c-orange"><use href="#bulb"/></svg><span class="name">Fill Light (GREEN)</span><svg class="ico c-teal child"><use href="#sun"/></svg>
                        <span class="row-end"><svg class="ico"><use href="#eye"/></svg><svg class="ico"><use href="#render-cam"/></svg></span></div>
                    <div class="row d2"><i class="tri"></i><svg class="ico c-orange"><use href="#bulb"/></svg><span class="name">Key Light (RED)</span><svg class="ico c-teal child"><use href="#sun"/></svg>
                        <span class="row-end"><svg class="ico"><use href="#eye"/></svg><svg class="ico"><use href="#render-cam"/></svg></span></div>
                    <div class="row d2"><i class="tri hidden"></i><svg class="ico c-orange"><use href="#empty"/></svg><span class="name">mirror</span>
                        <span class="row-end"><svg class="ico"><use href="#eye"/></svg><svg class="ico"><use href="#render-cam"/></svg></span></div>
                </div>
            </section>

            <!-- Properties -->
            <section class="properties">
                <div class="pane-header">
                    <span class="btn w-editor"><svg class="ico"><use href="#props"/></svg><svg class="chev"><use href="#chev"/></svg></span>
                    <span class="search-box prop-search"><svg class="ico"><use href="#search"/></svg></span>
                    <span class="btn w-more"><svg class="chev"><use href="#chev"/></svg></span>
                </div>
                <div class="prop-body">
                    <div class="prop-tabs">
                        <div class="tab-group">
                            <span class="p-tab"><svg class="ico c-grey"><use href="#t-tool"/></svg></span>
                        </div>
                        <div class="tab-group">
                            <span class="p-tab"><svg class="ico c-grey"><use href="#t-render"/></svg></span>
                            <span class="p-tab"><svg class="ico c-grey"><use href="#t-output"/></svg></span>
                            <span class="p-tab"><svg class="ico c-grey"><use href="#viewlayer"/></svg></span>
                            <span class="p-tab"><svg class="ico c-grey"><use href="#scene"/></svg></span>
                            <span class="p-tab"><svg class="ico c-red"><use href="#t-world"/></svg></span>
                        </div>
                        <div class="tab-group">
                            <span class="p-tab"><svg class="ico c-white"><use href="#collection"/></svg></span>
                        </div>
                        <div class="tab-group">
                            <span class="p-tab"><svg class="ico c-orange"><use href="#obj-frame"/></svg></span>
                            <span class="p-tab on"><svg class="ico c-blue"><use href="#t-wrench"/></svg></span>
                            <span class="p-tab"><svg class="ico c-dblue"><use href="#t-particle"/></svg></span>
                            <span class="p-tab"><svg class="ico c-dblue"><use href="#t-physics"/></svg></span>
                            <span class="p-tab"><svg class="ico c-dblue"><use href="#t-constraint"/></svg></span>
                            <span class="p-tab"><svg class="ico c-teal"><use href="#mesh-data"/></svg></span>
                            <span class="p-tab"><svg class="ico c-red"><use href="#t-material"/></svg></span>
                        </div>
                    </div>
                    <div class="prop-content">
                        <div class="crumb">
                            <svg class="ico"><use href="#obj-frame"/></svg>
                            <span>Cylinder</span>
                            <svg class="ico pin"><use href="#pin"/></svg>
                        </div>
                        <div class="add-modifier">Add Modifier<svg class="chev push"><use href="#chev"/></svg></div>
                    </div>
                </div>
            </section>
        </div>
    </main>

    <!-- Status bar -->
    <footer class="statusbar">
        <span class="hint h-select"><svg class="mouse"><use href="#mouse-l"/></svg>Select</span>
        <span class="hint h-rotate"><svg class="mouse"><use href="#mouse-m"/></svg>Rotate View</span>
        <span class="hint"><svg class="mouse"><use href="#mouse-r"/></svg>Call Menu</span>
        <span class="stats">Cylinder | Verts:4/48 | Edges:4/88 | Faces:1/42 | Tris:92 | Objects:1/6 | Memory: 42.6 MiB | 3.2.2</span>
    </footer>

    <!-- Desktop taskbar sliver -->
    <div class="taskbar">
        <i class="tb-left"></i><i class="tb-white"></i><i class="tb-a"></i><i class="tb-light"></i><i class="tb-b"></i><i class="tb-orange"></i><i class="tb-c"></i>
    </div>

</body>
</html>
```

FILE: styles.css
```css
/* Reset styles */
* {
    margin: 0;
    padding: 0;
    box-sizing: border-box;
}

body {
    width: 2560px;
    height: 1381px;
    display: flex;
    flex-direction: column;
    overflow: hidden;
    background: #141414;
    color: #e0e0e0;
    font-family: "DejaVu Sans", sans-serif;
    font-size: 10.1px;
}

.sheet {
    display: none;
}

i {
    font-style: normal;
}

.ico {
    display: block;
    flex: none;
    width: 15px;
    height: 15px;
}

.chev {
    display: block;
    flex: none;
    width: 10px;
    height: 10px;
}

.push {
    margin-left: auto;
}

/* Colours for icons */
.c-white { color: #e6e6e6; }
.c-grey { color: #b4b4b4; }
.c-orange { color: #d98d4c; }
.c-teal { color: #1fbf9c; }
.c-red { color: #b85a64; }
.c-blue { color: #6d9cf2; }
.c-dblue { color: #4d78c8; }

/* Top bar */
.topbar {
    flex: none;
    height: 26px;
    display: flex;
    align-items: center;
    background: #1d1d1d;
    padding-left: 10px;
}

.logo {
    width: 16px;
    height: 13px;
    margin-right: 10px;
    color: #e6e6e6;
}

.menus {
    display: flex;
    gap: 14.5px;
    width: 220px;
}

.workspaces {
    display: flex;
    align-items: flex-end;
    gap: 3px;
    height: 26px;
    color: #9a9a9a;
}

.workspaces a {
    height: 21px;
    padding: 0 8px;
    line-height: 21px;
    border-radius: 4px 4px 0 0;
}

.workspaces a.active {
    background: #303030;
    color: #e6e6e6;
}

.plus {
    height: 21px;
    line-height: 20px;
    padding-left: 4px;
    font-size: 15px;
}

.datablock {
    display: flex;
    width: 192px;
    height: 19px;
    margin-right: 8px;
    border: 1px solid #333;
    border-radius: 4px;
    overflow: hidden;
}

.scene-block {
    margin-left: auto;
    margin-right: 6px;
}

.db-type {
    width: 31px;
    display: flex;
    align-items: center;
    padding-left: 3px;
    background: #282828;
}

.db-type .ico {
    width: 14px;
    height: 14px;
}

.db-name {
    width: 120px;
    line-height: 17px;
    padding-left: 7px;
    background: #1d1d1d;
    border-left: 1px solid #333;
}

.db-copy {
    width: 22px;
    display: flex;
    align-items: center;
    justify-content: center;
    background: #4a4a4a;
}

.db-x {
    width: 19px;
    display: flex;
    align-items: center;
    justify-content: center;
    background: #303030;
    color: #777;
}

/* Main area */
.workspace {
    flex: none;
    height: 1329px;
    display: flex;
}

.viewport {
    position: relative;
    flex: none;
    width: 2114px;
    background: #3a3a3a;
    border-radius: 6px;
    overflow: hidden;
}

.scene {
    position: absolute;
    top: 0;
    left: 0;
    width: 2114px;
    height: 1329px;
}

.grid { fill: none; stroke: #4c4c4c; stroke-width: 1; }
.axis-red { fill: none; stroke: #6e2f3a; stroke-width: 1.5; }
.axis-green { fill: none; stroke: #4f5f2c; stroke-width: 1; }
.wire { fill: none; stroke: #111; stroke-width: 1; }

.f-top { fill: #a1a4a6; }
.f-light { fill: #a1a4a6; }
.f-side { fill: #525252; }
.f-strip { fill: #6f7272; }
.f-strip2 { fill: #7e8182; }
.f-dark { fill: #47443f; }
.f-brown { fill: #433f3c; }
.f-end { fill: #5a5b5c; }
.f-green { fill: #6c6f6e; }
.edge { stroke: #2c2c2c; stroke-width: .7; }
.f-selected { fill: #867870; stroke: #eeeeee; stroke-width: 1; }

.cursor-tick { fill: none; stroke: #111; stroke-width: 1; }
.cursor-a { fill: none; stroke: #fff; stroke-width: 1.5; }
.cursor-b { fill: none; stroke: #d8262c; stroke-width: 1.5; stroke-dasharray: 4 4; }
.origin { fill: #f29a1f; stroke: #222; stroke-width: .5; }

.note-ring { fill: none; stroke: #7dfc9f; stroke-width: 4.5; stroke-linecap: round; }
.note { fill: #7dfc9f; font-family: "Lato", sans-serif; font-size: 82px; font-weight: 300; }
.note-angle { font-size: 92px; }

.gz-x, .gz-y, .gz-z { fill: none; stroke-width: 2.5; }
.gz-x { stroke: #cf3350; }
.gz-y { stroke: #6e9a1e; }
.gz-z { stroke: #2d8ceb; }
.gz-nx { fill: #7b3a48; stroke: #cf3350; stroke-width: 1.5; }
.gz-nz { fill: #3a3f46; stroke: #2d69b4; stroke-width: 1.5; }
.gz-ny { fill: #546331; stroke: #84bd1c; stroke-width: 1.5; }
.gz-fx { fill: #cf3350; }
.gz-fy { fill: #6e9a1e; }
.gz-fz { fill: #2d8ceb; }
.gz-label { fill: #181818; font-size: 11px; text-anchor: middle; font-family: "DejaVu Sans", sans-serif; }

/* Header widgets */
.vp-header {
    position: relative;
    height: 25px;
    display: flex;
    align-items: center;
    padding: 0 8px 0 10px;
    background: #303030;
}

.hdr-left {
    flex: none;
    width: 922px;
    display: flex;
    align-items: center;
    gap: 7px;
}

.hdr-center {
    display: flex;
    align-items: center;
    gap: 7px;
}

.hdr-right {
    margin-left: auto;
    display: flex;
    align-items: center;
    gap: 7px;
}

.btn {
    display: flex;
    align-items: center;
    height: 19px;
    padding: 0 3px;
    background: #282828;
    border: 1px solid #252525;
    border-radius: 4px;
}

.btn-label {
    margin-left: 7px;
}

.w-editor { width: 31px; }
.w-mode { width: 108px; }
.w-mode .btn-label { margin-left: 6px; }
.w-global { width: 78px; }
.w-pivot { width: 30px; }
.w-pick { width: 32px; }
.w-xray { width: 18px; padding: 0 1px; }

.seg {
    display: flex;
    height: 19px;
    border-radius: 4px;
    overflow: hidden;
}

.seg-item {
    display: flex;
    flex: 1;
    align-items: center;
    justify-content: center;
    background: #545454;
    border-right: 1px solid #3a3a3a;
}

.seg-item.on { background: #4772b3; color: #fff; }
.seg-item.grey { background: #545454; }
.seg-item.dark { background: #282828; }

.w-selmode { width: 58px; }
.w-snap { width: 50px; }
.w-prop { width: 50px; }
.dim { opacity: .55; }
.w-gizmo { width: 38px; }
.w-shading { width: 95px; }

.snap-square {
    width: 11px;
    height: 12px;
    background: #e6e6e6;
}

.vp-menu {
    display: flex;
    gap: 15px;
    margin-left: 6px;
}

/* Tool settings */
.tool-settings {
    position: relative;
    height: 20px;
    margin-top: 4px;
    display: flex;
    align-items: center;
    padding: 0 6px 0 45px;
}

.check {
    display: flex;
    align-items: center;
    gap: 3px;
    margin-right: 23px;
}

.check i {
    width: 13px;
    height: 14px;
    background: #545454;
    border-radius: 3px;
}

.number {
    display: flex;
    justify-content: space-between;
    width: 163px;
    height: 20px;
    line-height: 20px;
    padding: 0 14px;
    background: #545454;
    border-radius: 4px;
}

.ts-right {
    margin-left: auto;
    display: flex;
    align-items: center;
    gap: 5px;
}

.dim-ico {
    color: #c0c0c0;
}

.xyz {
    display: flex;
    height: 20px;
    width: 48px;
    margin-left: 2px;
    border-radius: 4px;
    overflow: hidden;
}

.xyz i {
    flex: 1;
    text-align: center;
    line-height: 20px;
    background: #545454;
    border-right: 1px solid #3a3a3a;
}

.snapbtn {
    display: flex;
    width: 19px;
    height: 20px;
    align-items: center;
    justify-content: center;
    background: #545454;
    border-radius: 4px;
    color: #999;
    opacity: .7;
    margin-left: 2px;
}

.w-options {
    width: 62px;
    height: 20px;
    padding: 0 3px 0 6px;
    margin-left: 1px;
}

.vp-info {
    position: absolute;
    left: 67px;
    top: 59px;
    line-height: 18px;
    color: #f0f0f0;
    text-shadow: 0 1px 1px #000;
}

/* Toolbar */
.toolbar {
    position: absolute;
    left: 9px;
    top: 59.5px;
    width: 40px;
    display: flex;
    flex-direction: column;
    gap: 5.4px;
}

.tool-group {
    background: #282828;
    border-radius: 4px;
    overflow: hidden;
}

.tool {
    position: relative;
    height: 34.8px;
    display: flex;
    align-items: center;
    justify-content: center;
    border-bottom: 1px solid #232323;
}

.tool:last-child {
    border-bottom: none;
}

.tool svg {
    width: 24px;
    height: 21px;
}

.tool.active {
    background: #4772b3;
}

.tool.more::after {
    content: "";
    position: absolute;
    right: 2px;
    bottom: 2px;
    border-left: 4px solid transparent;
    border-bottom: 4px solid #c8c8c8;
}

/* Navigation buttons */
.nav-buttons {
    position: absolute;
    left: 1859px;
    top: 141px;
    display: flex;
    flex-direction: column;
    gap: 2px;
}

.nav-btn {
    width: 28px;
    height: 28px;
    display: flex;
    align-items: center;
    justify-content: center;
    background: #282828;
    border-radius: 50%;
    color: #f0f0f0;
}

/* Sidebar */
.side-panels {
    position: absolute;
    left: 1903px;
    top: 53px;
    width: 184px;
    display: flex;
    flex-direction: column;
    gap: 2px;
}

.side-panel {
    display: flex;
    align-items: center;
    height: 25px;
    padding: 0 8px 0 9px;
    background: #424242;
    border-radius: 4px;
    color: #f0f0f0;
}

.chev-r {
    width: 10px;
    height: 10px;
    margin-right: 4px;
    color: #bbb;
}

.grip {
    width: 11px;
    height: 6px;
    margin-left: auto;
    background: radial-gradient(circle, #999 .7px, transparent 1px) 0 0 / 3px 3px;
}

.side-tabs {
    position: absolute;
    right: 0;
    top: 52px;
    bottom: 0;
    width: 20px;
    display: flex;
    flex-direction: column;
    gap: 4px;
    padding-top: 4px;
    background: #1d1d1d;
}

.side-tabs a {
    width: 17px;
    display: block;
    writing-mode: vertical-rl;
    transform: rotate(180deg);
    text-align: center;
    line-height: 17px;
    background: #303030;
    border-radius: 0 4px 4px 0;
    color: #c0c0c0;
}

.side-tabs a.active {
    background: #3f3f3f;
    color: #e6e6e6;
}

.t-item { height: 39px; }
.t-tool { height: 37px; }
.t-view { height: 41px; }
.t-edit { height: 35px; }
.t-quad { height: 80px; }

/* Last operator panel */
.op-panel {
    position: absolute;
    left: 63px;
    top: 1198px;
    width: 280px;
    height: 127px;
    padding: 4px 8px;
    background: #181818;
    border-radius: 4px;
    color: #a8a8a8;
}

.op-title {
    display: flex;
    align-items: center;
    gap: 4px;
    height: 18px;
    margin-bottom: 11px;
}

.op-grid {
    display: grid;
    grid-template-columns: 102px 153px;
    grid-auto-rows: 20px;
    gap: 2px 9px;
}

.op-label {
    line-height: 20px;
    text-align: right;
}

.op-value {
    line-height: 20px;
    text-align: center;
    background: #545454;
    border-radius: 4px;
    color: #e6e6e6;
}

.op-select {
    display: flex;
    align-items: center;
    padding: 0 3px 0 6px;
    background: #282828;
    border: 1px solid #333;
    border-radius: 4px;
    color: #e0e0e0;
}

.op-check {
    color: #a8a8a8;
}

/* Right column */
.side-column {
    flex: none;
    width: 443px;
    margin-left: 3px;
    display: flex;
    flex-direction: column;
    gap: 3px;
}

.outliner {
    height: 426px;
    background: #282828;
    border-radius: 6px;
    overflow: hidden;
}

.pane-header {
    height: 25px;
    display: flex;
    align-items: center;
    padding: 0 8px;
    background: #303030;
}

.w-display { margin-left: 5px; }
.w-filter { margin-left: auto; }
.w-new { width: 20px; padding: 0 1px; background: #545454; margin-left: 5px; }
.w-more { width: 20px; padding: 0 4px; margin-left: auto; }

.search-box {
    display: flex;
    align-items: center;
    height: 19px;
    padding-left: 3px;
    background: #1d1d1d;
    border: 1px solid #282828;
    border-radius: 4px;
}

.out-search { width: 110px; margin-left: 78px; }
.prop-search { width: 110px; margin-left: 127px; }

.tree {
    position: relative;
    height: 401px;
    padding-top: 1px;
    background: repeating-linear-gradient(#282828 0, #282828 20px, #2b2b2b 20px, #2b2b2b 40px);
}

.tree-line {
    position: absolute;
    left: 30px;
    top: 46px;
    width: 1px;
    height: 110px;
    background: #555;
}

.row {
    position: relative;
    display: flex;
    align-items: center;
    height: 20px;
    color: #c4c4c4;
}

.row.selected {
    background: #334d80;
}

.d0 { padding-left: 22px; }
.d1 { padding-left: 28px; }
.d2 { padding-left: 47px; }

.name {
    margin-left: 7px;
}

.c-name {
    color: #f0a83c;
}

.d0 .name { margin-left: 8px; }

.tri {
    width: 0;
    height: 0;
    margin-right: 9px;
    border-left: 6px solid #c0c0c0;
    border-top: 4px solid transparent;
    border-bottom: 4px solid transparent;
}

.tri.down {
    margin-right: 4px;
    border-top: 6px solid #c0c0c0;
    border-left: 4px solid transparent;
    border-right: 4px solid transparent;
    border-bottom: none;
}

.tri.hidden {
    visibility: hidden;
}

.icon-box {
    display: flex;
    width: 19px;
    height: 19px;
    align-items: center;
    justify-content: center;
    background: #3f3f3f;
    border-radius: 4px;
}

.icon-box .ico { width: 13px; height: 13px; }

.icon-box + .name {
    margin-left: 5px;
}

.active-box {
    display: flex;
    width: 20px;
    height: 18px;
    align-items: center;
    justify-content: center;
    margin: 0 -1px 0 -1px;
    background: #5a75a8;
    border-radius: 4px;
}

.child-box {
    display: flex;
    width: 19px;
    height: 18px;
    align-items: center;
    justify-content: center;
    margin-left: 21px;
    background: #3c6860;
    border-radius: 5px;
}

.child-box.sel {
    background: #2a6a80;
}

.child {
    margin-left: 22px;
}

.row-mode {
    position: absolute;
    left: 3px;
    top: 3px;
    width: 14px;
    height: 14px;
    color: #ddd;
}

.row-end {
    position: absolute;
    right: 12px;
    top: 2px;
    display: flex;
    align-items: center;
    gap: 5px;
    color: #dcdcdc;
}

.row-end .ico {
    width: 15px;
    height: 15px;
}

/* Properties */
.properties {
    flex: 1;
    display: flex;
    flex-direction: column;
    background: #303030;
    border-radius: 6px;
    overflow: hidden;
}

.prop-body {
    flex: 1;
    display: flex;
}

.prop-tabs {
    flex: none;
    width: 28px;
    padding-top: 8px;
    display: flex;
    flex-direction: column;
    gap: 7px;
    background: #1d1d1d;
}

.tab-group {
    border-bottom: 1px solid #2a2a2a;
}

.p-tab {
    display: flex;
    height: 28px;
    align-items: center;
    justify-content: center;
}

.p-tab.on {
    margin-left: 2px;
    background: #303030;
    border-radius: 4px 0 0 4px;
}

.prop-content {
    flex: 1;
    padding: 10px 8px;
}

.crumb {
    display: flex;
    align-items: center;
    gap: 9px;
    height: 17px;
    margin: 0 0 17px 3px;
}

.pin {
    margin-left: auto;
    color: #888;
}

.add-modifier {
    display: flex;
    align-items: center;
    height: 20px;
    padding: 0 3px 0 8px;
    background: #282828;
    border: 1px solid #3c3c3c;
    border-radius: 4px;
}

/* Status bar */
.statusbar {
    flex: none;
    height: 21px;
    display: flex;
    align-items: center;
    padding: 0 8px 0 11px;
    background: #1d1d1d;
    color: #a0a0a0;
}

.hint {
    display: flex;
    align-items: center;
    gap: 10px;
}

.h-select { width: 212px; }
.h-rotate { width: 211px; }

.mouse {
    width: 13px;
    height: 18px;
}

.stats {
    margin-left: auto;
}

/* Taskbar sliver */
.taskbar {
    flex: none;
    height: 5px;
    display: flex;
}

.tb-left { width: 48px; background: #1c1a3a; }
.tb-white { width: 344px; background: #f2f2f2; }
.tb-a { width: 148px; background: #17224a; }
.tb-light { width: 48px; background: #4d5a78; }
.tb-b { width: 392px; background: #17224a; }
.tb-orange { width: 50px; background: #b8672c; }
.tb-c { flex: 1; background: #1c1a3a; }
```
